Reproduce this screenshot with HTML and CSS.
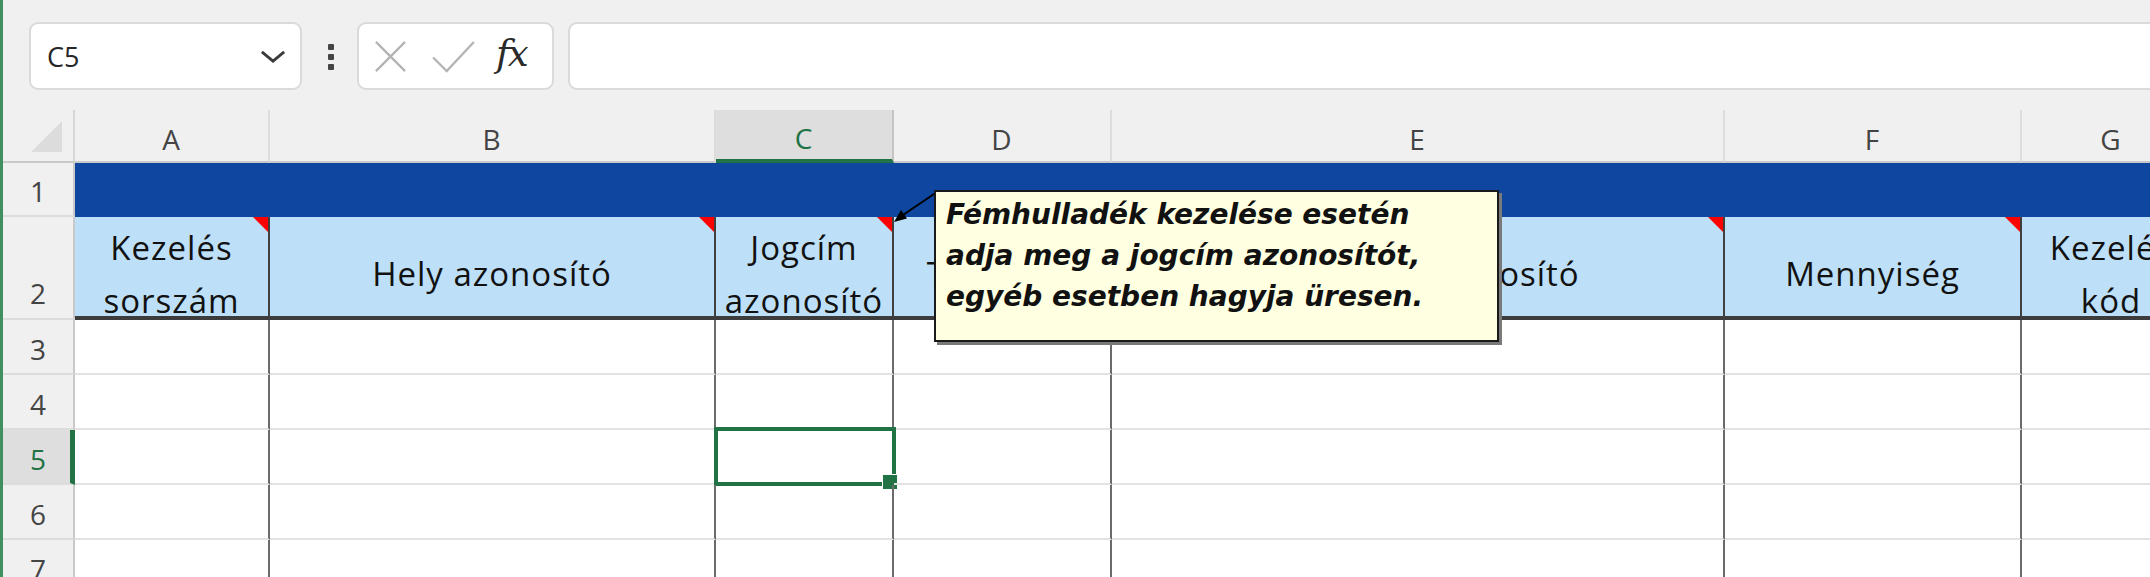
FILE: index.html
```html
<!DOCTYPE html>
<html lang="hu">

<head>
  <meta charset="UTF-8">
  <meta name="viewport" content="width=device-width, initial-scale=1.0">
  <title>Munkalap</title>
  <link rel="stylesheet" href="styles.css">
</head>

<body>

  <div class="window">

    <!-- Formula bar -->
    <div class="formula-bar">
      <div class="name-box">
        <span>C5</span>
        <svg class="chevron" viewBox="0 0 28 16">
          <path d="M2,3 L14,13 L26,3" />
        </svg>
      </div>
      <svg class="grip" viewBox="0 0 8 30">
        <rect x="1" y="2" width="6" height="6" rx="1" />
        <rect x="1" y="12" width="6" height="6" rx="1" />
        <rect x="1" y="22" width="6" height="6" rx="1" />
      </svg>
      <div class="fx-buttons">
        <svg class="btn-cancel" viewBox="0 0 34 34">
          <path d="M2,2 L32,32 M32,2 L2,32" />
        </svg>
        <svg class="btn-enter" viewBox="0 0 46 34">
          <path d="M2,18 L16,32 L44,2" />
        </svg>
        <span class="fx">fx</span>
      </div>
      <div class="formula-input"></div>
    </div>

    <!-- Sheet -->
    <div class="sheet">

      <div class="row col-heads">
        <div class="corner"></div>
        <div class="col-head">A</div>
        <div class="col-head">B</div>
        <div class="col-head active">C</div>
        <div class="col-head">D</div>
        <div class="col-head">E</div>
        <div class="col-head">F</div>
        <div class="col-head">G</div>
      </div>

      <div class="row title-row">
        <div class="row-head">1</div>
        <div class="title-band"></div>
      </div>

      <div class="row head-row">
        <div class="row-head">2</div>
        <div class="cell head note-mark">Kezelés sorszám</div>
        <div class="cell head note-mark">Hely azonosító</div>
        <div class="cell head note-mark">Jogcím azonosító</div>
        <div class="cell head note-mark">Tétel kód</div>
        <div class="cell head note-mark">Telephely azonosító</div>
        <div class="cell head note-mark">Mennyiség</div>
        <div class="cell head note-mark">Kezelés kód</div>
      </div>

      <div class="row">
        <div class="row-head">3</div>
        <div class="cell"></div><div class="cell"></div><div class="cell"></div><div class="cell"></div>
        <div class="cell"></div><div class="cell"></div><div class="cell"></div>
      </div>
      <div class="row">
        <div class="row-head">4</div>
        <div class="cell"></div><div class="cell"></div><div class="cell"></div><div class="cell"></div>
        <div class="cell"></div><div class="cell"></div><div class="cell"></div>
      </div>
      <div class="row">
        <div class="row-head active">5</div>
        <div class="cell"></div><div class="cell"></div><div class="cell selected"></div><div class="cell"></div>
        <div class="cell"></div><div class="cell"></div><div class="cell"></div>
      </div>
      <div class="row">
        <div class="row-head">6</div>
        <div class="cell"></div><div class="cell"></div><div class="cell"></div><div class="cell"></div>
        <div class="cell"></div><div class="cell"></div><div class="cell"></div>
      </div>
      <div class="row">
        <div class="row-head">7</div>
        <div class="cell"></div><div class="cell"></div><div class="cell"></div><div class="cell"></div>
        <div class="cell"></div><div class="cell"></div><div class="cell"></div>
      </div>

      <!-- Comment on C2 -->
      <svg class="note-arrow" viewBox="0 0 60 40">
        <line x1="57" y1="5" x2="20" y2="30" />
        <polygon points="14,35 27,31.5 21,23" />
      </svg>
      <div class="note">Fémhulladék kezelése esetén<br>adja meg a jogcím azonosítót,<br>egyéb esetben hagyja üresen.</div>

    </div>

  </div>

</body>

</html>
```

FILE: styles.css
```css
/* Basic page setup */
* {
  box-sizing: border-box;
}
body {
  margin: 0;
  background-color: #fff;
  overflow: hidden;
  font-family: "Open Sans", "Noto Sans", sans-serif;
}
.window {
  border-left: 3px solid #3f8f5f;
  min-height: 100vh;
  overflow: hidden;
  --cols: 72px 195px 446px 178px 218px 613px 297px 180px;
}

/* Formula bar */
.formula-bar {
  display: flex;
  align-items: flex-start;
  height: 110px;
  padding: 22px 0 0 26px;
  background-color: #f0f0f0;
}
.name-box {
  display: flex;
  align-items: center;
  justify-content: space-between;
  width: 273px;
  height: 68px;
  padding: 0 14px 0 16px;
  background-color: #fff;
  border: 2px solid #dadada;
  border-radius: 9px;
  font-size: 27px;
  color: #262626;
}
.chevron {
  width: 26px;
  height: 15px;
}
.chevron path {
  fill: none;
  stroke: #3a3a3a;
  stroke-width: 3;
}
.grip {
  width: 8px;
  height: 30px;
  margin: 20px 22px 0 25px;
  fill: #444;
}
.fx-buttons {
  display: flex;
  align-items: center;
  width: 197px;
  height: 68px;
  padding: 0 0 0 15px;
  background-color: #fff;
  border: 2px solid #dadada;
  border-radius: 9px;
}
.btn-cancel {
  width: 33px;
  height: 33px;
}
.btn-enter {
  width: 45px;
  height: 33px;
  margin-left: 24px;
}
.btn-cancel path, .btn-enter path {
  fill: none;
  stroke: #b4b4b4;
  stroke-width: 2.4;
}
.fx {
  margin-left: 20px;
  font-family: "DejaVu Serif", "Liberation Serif", serif;
  font-style: italic;
  font-size: 37px;
  color: #2a2a2a;
  letter-spacing: -2px;
  padding-bottom: 6px;
}
.formula-input {
  flex: 1;
  height: 68px;
  margin: 0 -20px 0 14px;
  background-color: #fff;
  border: 2px solid #dadada;
  border-radius: 9px;
}

/* Sheet grid */
.sheet {
  position: relative;
}
.row {
  display: grid;
  grid-template-columns: var(--cols);
  grid-template-rows: minmax(0, 1fr);
  height: 55px;
}
.col-heads {
  height: 53px;
  background-color: #f0f0f0;
}
.title-row {
  height: 54px;
}
.head-row {
  height: 103px;
}

.corner {
  position: relative;
  border-right: 2px solid #d6d6d6;
  border-bottom: 2px solid #c9c9c9;
}
.corner::after {
  content: "";
  position: absolute;
  right: 11px;
  bottom: 9px;
  width: 31px;
  height: 31px;
  background-color: #dcdcdc;
  clip-path: polygon(100% 0, 100% 100%, 0 100%);
}
.col-head {
  display: flex;
  align-items: center;
  justify-content: center;
  padding-top: 6px;
  border-right: 2px solid #dcdcdc;
  border-bottom: 2px solid #c9c9c9;
  font-size: 28px;
  letter-spacing: 1px;
  color: #444;
}
.col-head.active {
  background-color: #dedede;
  border-right-color: #c4c4c4;
  border-bottom: 4px solid #217346;
  color: #217346;
}

.row-head {
  display: flex;
  align-items: center;
  justify-content: center;
  padding-top: 4px;
  background-color: #f0f0f0;
  border-right: 2px solid #c9c9c9;
  border-bottom: 2px solid #dcdcdc;
  font-size: 28px;
  color: #444;
  overflow: hidden;
}
.head-row .row-head {
  padding-top: 50px;
}
.row-head.active {
  background-color: #dedede;
  border-right: 5px solid #217346;
  color: #217346;
  padding-left: 3px;
}

.title-band {
  grid-column: 2 / -1;
  background-color: #0e46a0;
}

.cell {
  position: relative;
  border-right: 2px solid #6b6b6b;
  border-bottom: 2px solid #e3e3e3;
}
.cell.head {
  display: flex;
  align-items: center;
  justify-content: center;
  padding-top: 14px;
  text-align: center;
  line-height: 53px;
  font-size: 33px;
  letter-spacing: 1px;
  color: #111;
  background-color: #bde0f8;
  border-right-color: #404040;
  border-bottom: 4px solid #3c3c3c;
}

/* Red comment indicators */
.note-mark::after {
  content: "";
  position: absolute;
  top: 0;
  right: 0;
  border-top: 15px solid #ff0000;
  border-left: 15px solid transparent;
}

/* Active cell */
.cell.selected::before {
  content: "";
  position: absolute;
  top: -3px;
  left: -2px;
  right: -4px;
  bottom: -3px;
  border: 4px solid #217346;
}
.cell.selected::after {
  content: "";
  position: absolute;
  right: -6px;
  bottom: -7px;
  width: 14px;
  height: 14px;
  background-color: #217346;
  border: 1px solid #fff;
}

/* Comment box with arrow */
.note-arrow {
  position: absolute;
  left: 877px;
  top: 77px;
  width: 60px;
  height: 40px;
}
.note-arrow line {
  stroke: #000;
  stroke-width: 2;
}
.note-arrow polygon {
  fill: #000;
}
.note {
  position: absolute;
  left: 931px;
  top: 80px;
  width: 565px;
  height: 152px;
  padding: 2px 10px;
  background-color: #ffffe1;
  border: 2px solid #1a1a1a;
  box-shadow: 3px 3px 0 #7a7a7a;
  font-family: "DejaVu Sans", sans-serif;
  font-weight: bold;
  font-style: italic;
  font-size: 28px;
  line-height: 41px;
  color: #111;
  white-space: nowrap;
}
```
